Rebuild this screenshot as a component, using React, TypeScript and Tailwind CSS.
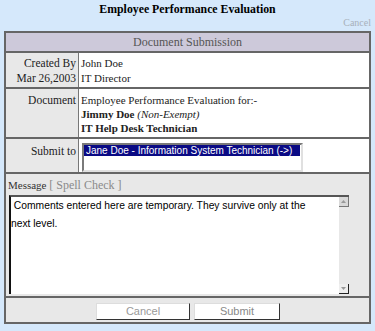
import React from "react";

export default function App() {
  const serif = { fontFamily: '"Liberation Serif", "Times New Roman", serif' };
  const sans = { fontFamily: '"Liberation Sans", Arial, sans-serif' };
  return (
    <div className="w-[375px] h-[331px] bg-[#d5e8fb] overflow-hidden" style={serif}>
      <div className="h-[31px] relative">
        <div className="text-center font-bold text-[11.8px] leading-[16px] pt-[1px] text-black">
          Employee Performance Evaluation
        </div>
        <div className="absolute right-[4px] top-[17px] text-[10px] leading-[12px] text-[#a8b0ba]">Cancel</div>
      </div>
      <div className="mx-[4px] w-[367px] border-2 border-[#666] bg-white">
        <div className="h-[20px] bg-[#cdc9da] border-b-2 border-[#666] text-center text-[12px] leading-[19px] text-[#555]">
          Document Submission
        </div>
        <div className="flex border-b-2 border-[#666] h-[36px]">
          <div className="w-[73px] bg-[#e8e8e8] border-r border-[#777] text-right pr-[2px] pt-[3px] text-[11.5px] leading-[15px] text-[#222]">
            <div>Created By</div>
            <div>Mar 26,2003</div>
          </div>
          <div className="pl-[2px] pt-[3px] text-[11px] leading-[15px] text-[#222]">
            <div>John Doe</div>
            <div>IT Director</div>
          </div>
        </div>
        <div className="flex border-b-2 border-[#666] h-[50px]">
          <div className="w-[73px] bg-[#e8e8e8] border-r border-[#777] text-right pr-[2px] pt-[4px] text-[11.5px] leading-[15px] text-[#222]">
            Document
          </div>
          <div className="pl-[2px] pt-[4px] text-[11px] leading-[14px] text-[#222]">
            <div>Employee Performance Evaluation for:-</div>
            <div>
              <span className="font-bold">Jimmy Doe</span> <span className="italic">(Non-Exempt)</span>
            </div>
            <div className="font-bold">IT Help Desk Technician</div>
          </div>
        </div>
        <div className="flex border-b-2 border-[#666] h-[35px]">
          <div className="w-[73px] bg-[#e8e8e8] border-r border-[#777] text-right pr-[2px] pt-[5px] text-[11.5px] leading-[15px] text-[#222]">
            Submit to
          </div>
          <div className="pl-[3px] pt-[4px]">
            <div className="w-[221px] h-[29px] border-2 border-t-[#7a7a7a] border-l-[#7a7a7a] border-r-[#e0e0e0] border-b-[#e0e0e0] bg-white">
              <div className="bg-[#0a0a84] text-white text-[10px] leading-[11px] pl-[2px] w-[216px] whitespace-nowrap" style={sans}>
                Jane Doe - Information System Technician (-&gt;)
              </div>
            </div>
          </div>
        </div>
        <div className="bg-[#e8e8e8] h-[124px] border-b-2 border-[#666] pl-[2px] pt-[4px]">
          <div className="text-[11px] leading-[14px] text-[#333]">
            Message <span className="text-[#8a8a8a] text-[12px]">[ Spell Check ]</span>
          </div>
          <div className="mt-[3px] ml-[1px] w-[340px] h-[99px] flex border-t-2 border-l-2 border-t-[#555] border-l-[#111] bg-white">
            <div className="flex-1 pr-[26px] text-[10.3px] leading-[18px] text-black" style={sans}>
              &nbsp;Comments entered here are temporary. They survive only at the next level.
            </div>
            <div className="w-[10px] bg-[#e8e8e8] flex flex-col justify-between">
              <div className="h-[10px] bg-[#d8d8d8] border-r border-b border-[#777] flex items-center justify-center">
                <svg width="5" height="3" viewBox="0 0 5 3"><path d="M2.5 0 L5 3 L0 3Z" fill="#999" /></svg>
              </div>
              <div className="h-[10px] bg-[#eeeeee] border-r border-b border-[#222] flex items-center justify-center">
                <svg width="5" height="3" viewBox="0 0 5 3"><path d="M0 0 L5 0 L2.5 3Z" fill="#999" /></svg>
              </div>
            </div>
          </div>
        </div>
        <div className="bg-[#e8e8e8] h-[24px] flex gap-[4px] pt-[5px] pl-[90px]" style={sans}>
          <button className="w-[94px] h-[17px] bg-white border border-t-[#ddd] border-l-[#ddd] border-r-[#333] border-b-[#333] text-[11px] leading-[15px] text-[#999]">
            Cancel
          </button>
          <button className="w-[86px] h-[17px] bg-white border border-t-[#ddd] border-l-[#ddd] border-r-[#333] border-b-[#333] text-[11px] leading-[15px] text-[#888]">
            Submit
          </button>
        </div>
      </div>
    </div>
  );
}
